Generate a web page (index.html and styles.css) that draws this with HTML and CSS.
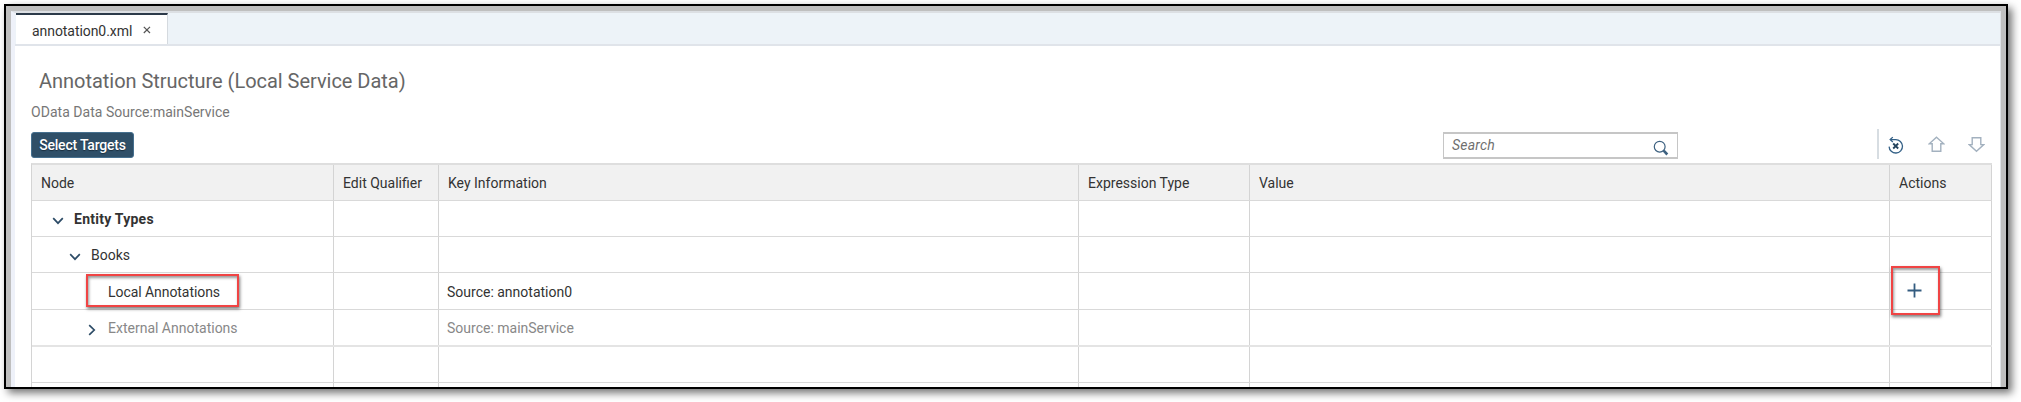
FILE: index.html
```
<!DOCTYPE html>
<html lang="en">
<head>
<meta charset="utf-8">
<title>annotation0.xml</title>
<link rel="stylesheet" href="styles.css">
</head>
<body>
<div class="window">
  <div class="editor">
    <div class="tabbar">
      <div class="tab"><span class="t-tab">annotation0.xml</span>
        <svg class="close" width="8" height="8" viewBox="0 0 8 8"><path d="M.8.8l6.2 6.2M7 .8L.8 7"/></svg>
      </div>
    </div>
    <main class="content">
      <h1 class="title">Annotation Structure (Local Service Data)</h1>
      <p class="source">OData Data Source:mainService</p>
      <div class="toolbar">
        <button class="select-btn">Select Targets</button>
        <div class="search"><span class="t-search">Search</span>
          <svg class="lens" width="16" height="16" viewBox="0 0 16 16"><circle cx="6.7" cy="6.7" r="5.4"/><path class="handle" d="M10.7 10.7l3.6 3.8"/></svg>
        </div>
        <div class="tools">
          <svg class="reset" width="16" height="18" viewBox="0 0 16 18"><path d="M2.5 3.6h5.1a6.7 6.7 0 1 1-6.5 7"/><path d="M4.8 1.1L2.2 3.6l2.6 2.3"/><path class="x" d="M5.2 7.5l5 5M10.2 7.5l-5 5"/></svg>
          <svg class="arrow" width="17" height="17" viewBox="0 0 17 17"><path d="M8.5 1.2l7.3 6.6h-3v7.4H4.2V7.8h-3z"/></svg>
          <svg class="arrow" width="17" height="17" viewBox="0 0 17 17"><path d="M8.5 15.2l7.3-6.6h-3V1.7H4.2v6.9h-3z"/></svg>
        </div>
      </div>
      <div class="table">
        <div class="row head">
          <div class="cell">Node</div><div class="cell">Edit Qualifier</div><div class="cell">Key Information</div><div class="cell">Expression Type</div><div class="cell">Value</div><div class="cell">Actions</div>
        </div>
        <div class="row r1">
          <div class="cell l1"><svg class="chev" width="12" height="8" viewBox="0 0 12 8"><path d="M1.2 1.2L6 6.2l4.8-5"/></svg><b class="t-entity">Entity Types</b></div><div class="cell"></div><div class="cell"></div><div class="cell"></div><div class="cell"></div><div class="cell"></div>
        </div>
        <div class="row r2">
          <div class="cell l2"><svg class="chev" width="12" height="8" viewBox="0 0 12 8"><path d="M1.2 1.2L6 6.2l4.8-5"/></svg><span>Books</span></div><div class="cell"></div><div class="cell"></div><div class="cell"></div><div class="cell"></div><div class="cell"></div>
        </div>
        <div class="row r3">
          <div class="cell l3"><span class="t-local">Local Annotations</span><i class="mark mark-node"></i></div><div class="cell"></div><div class="cell">Source: annotation0</div><div class="cell"></div><div class="cell"></div>
          <div class="cell action"><svg class="plus" width="15" height="15" viewBox="0 0 15 15"><path d="M7.5 .5v14M.5 7.5h14"/></svg><i class="mark mark-action"></i></div>
        </div>
        <div class="row r4 muted">
          <div class="cell l4"><svg class="chev" width="8" height="12" viewBox="0 0 8 12"><path d="M1.2 1.2L6.2 6l-5 4.8"/></svg><span>External Annotations</span></div><div class="cell"></div><div class="cell">Source: mainService</div><div class="cell"></div><div class="cell"></div><div class="cell"></div>
        </div>
        <div class="row r5"><div class="cell"></div><div class="cell"></div><div class="cell"></div><div class="cell"></div><div class="cell"></div><div class="cell"></div></div>
        <div class="row r6"><div class="cell"></div><div class="cell"></div><div class="cell"></div><div class="cell"></div><div class="cell"></div><div class="cell"></div></div>
      </div>
    </main>
  </div>
</div>
</body>
</html>
```
FILE: styles.css
```
* { box-sizing: border-box; }
body {
  margin: 0;
  padding: 4px 0 0 4px;
  height: 402px;
  overflow: hidden;
  background: #fff;
  font: 14px/20px Roboto, "Liberation Sans", sans-serif;
  color: #333;
}
svg { display: block; flex: none; fill: none; }
.window {
  width: 2004px;
  height: 385px;
  border: 2px solid #000;
  padding: 5px 5px 0 5px;
  background: #bfbfbf;
  box-shadow: 4px 4px 8px rgba(0, 0, 0, .55);
}
.editor {
  height: 376px;
  overflow: hidden;
  background: #fff;
  border-top: 2px solid #dcdfe3;
  border-left: 4px solid #eef1f9;
  border-right: 1px solid #dfe2e6;
}
.tabbar {
  height: 33px;
  padding-left: 1px;
  background: #edf3f8;
  border-bottom: 2px solid #e0e4ea;
}
.tab {
  display: flex;
  align-items: center;
  width: 152px;
  height: 31px;
  padding: 3px 0 0 16px;
  background: #fff;
  border-top: 2px solid #2c3a49;
  border-right: 1px solid #d5dadf;
}
.t-tab { letter-spacing: -.06px; }
.close { margin: -3px 0 0 11px; stroke: #555; stroke-width: 1.2; }
.tab, .source { white-space: nowrap; }
.content { padding: 0 9px 0 16px; }
.title {
  margin: 0;
  padding: 21px 0 0 8px;
  font-size: 20px;
  font-weight: 400;
  line-height: 28px;
  letter-spacing: -.03px;
  color: #666;
}
.source { margin: 0; padding-top: 7px; letter-spacing: .03px; color: #777; }
.toolbar {
  display: flex;
  height: 41px;
  padding-top: 10px;
}
.select-btn {
  flex: none;
  width: 103px;
  height: 26px;
  padding: 0;
  border: 1px solid #46708f;
  border-radius: 3px;
  background: #2f4f68;
  color: #fff;
  font: 500 14px/24px Roboto, sans-serif;
  letter-spacing: -.2px;
  text-shadow: 0 1px 1px #1a2e3e;
  white-space: nowrap;
}
.search {
  display: flex;
  flex: none;
  align-items: center;
  justify-content: space-between;
  width: 235px;
  height: 27px;
  margin: 0 0 0 1309px;
  padding: 0 8px 0 8px;
  border: 2px solid #c6c6c6;
  border-left-width: 1px;
  border-right-width: 1px;
  font-style: italic;
  color: #707070;
}
.t-search { letter-spacing: .2px; margin-top: -1px; }
.lens { margin-top: 5px; stroke: #3d6180; stroke-width: 1.2; }
.handle { stroke-width: 2.6; }
.tools {
  display: flex;
  flex: none;
  align-items: flex-start;
  height: 30px;
  margin: -3px 0 0 199px;
  padding: 7px 0 0 9px;
  border-left: 2px solid #d7dde2;
}
.reset { stroke: #346187; stroke-width: 1.3; margin-right: 24px; }
.x { stroke: #24435c; stroke-width: 1.8; }
.arrow { stroke: #a3b1bf; stroke-width: 1.4; margin-right: 23px; }
.arrow:last-child { margin-right: 0; }
.table {
  width: 1961px;
  border-top: 2px solid #dedede;
  border-left: 1px solid #d4d4d4;
}
.row {
  display: grid;
  grid-template-columns: 302px 105px 640px 171px 640px 102px;
  height: 36px;
  border-bottom: 1px solid #d9d9d9;
}
.r3, .r4 { height: 37px; }
.r4 { border-bottom: 2px solid #e4e4e4; }
.cell {
  position: relative;
  display: flex;
  align-items: center;
  padding-left: 9px;
  border-right: 1px solid #d4d4d4;
  white-space: nowrap;
}
.head { background: #f1f1f1; }
.r3 .cell, .r4 .cell { padding-left: 8px; padding-top: 1px; }
.row .l1 { padding-left: 20px; }
.row .l2 { padding-left: 37px; }
.row .l3 { padding-left: 76px; }
.row .l4 { padding-left: 56px; }
.chev { stroke: #2c4b66; stroke-width: 1.7; margin: 4px 10px 0 0; }
.l4 .chev { margin-right: 12px; margin-top: 3px; }
.t-entity { letter-spacing: .25px; }
.t-local { letter-spacing: -.06px; }
.muted { color: #888; }
.r3 .action { padding-left: 17px; }
.plus { stroke: #345c80; stroke-width: 1.8; margin-top: -3px; }
.mark {
  position: absolute;
  z-index: 2;
  border: 2px solid #f04444;
  box-shadow: 1px 2px 3px rgba(0, 0, 0, .5), inset 1px 2px 3px rgba(0, 0, 0, .4);
}
.mark-node { left: 54px; top: 1px; width: 153px; height: 33px; }
.mark-action { left: 1px; top: -7px; width: 49px; height: 49px; }
```
